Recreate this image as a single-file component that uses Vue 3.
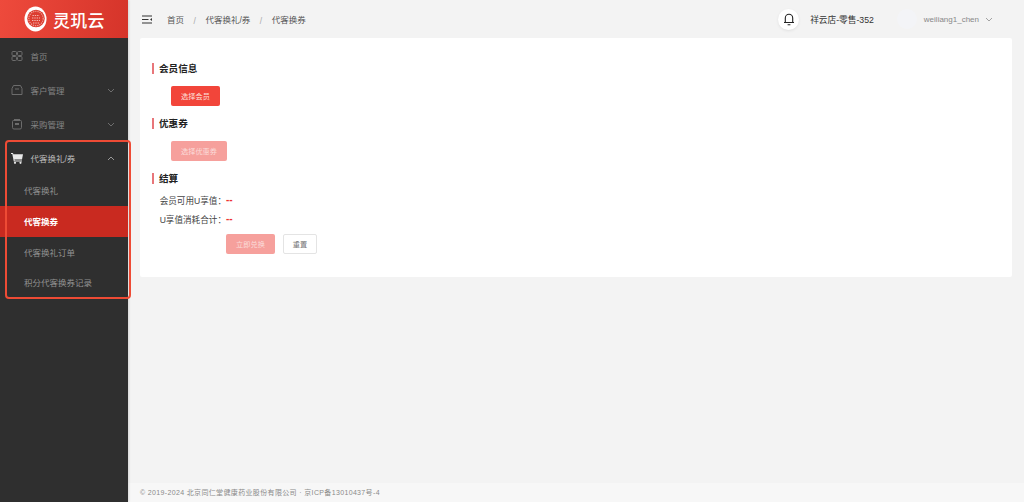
<template>
  <div class="page">
    <aside class="side">
      <div class="logo">
        <svg class="seal" width="24" height="26" viewBox="0 0 24 26">
          <ellipse cx="11.5" cy="13" rx="11" ry="12.5" fill="#fff" />
          <circle cx="12" cy="12.5" r="8.8" fill="#dc3d30" />
          <circle cx="12" cy="12.5" r="7.2" fill="none" stroke="#f0a79e" stroke-width="1.1" stroke-dasharray="1.2 1" />
          <path d="M8.5 9.5h7M8 12h8M8 14.5h8M9 17h6" stroke="#f3b5ad" stroke-width="1.1" stroke-dasharray="1.4 0.9" />
        </svg>
        <span class="brand">灵玑云</span>
      </div>
      <nav class="menu">
        <div class="item">
          <svg class="ic" width="12" height="12" viewBox="0 0 12 12" fill="none" stroke="#6c6c6c" stroke-width="1">
            <rect x="1" y="1.5" width="4.5" height="4" rx="1" /><rect x="6.5" y="1.5" width="4.5" height="4" rx="1" />
            <rect x="1" y="6.5" width="4.5" height="4" rx="1" /><rect x="6.5" y="6.5" width="4.5" height="4" rx="1" />
          </svg>
          <span>首页</span>
        </div>
        <div class="item">
          <svg class="ic" width="12" height="12" viewBox="0 0 12 12" fill="none" stroke="#6c6c6c" stroke-width="1">
            <path d="M2.5 1.5h7l1.5 3v6H1v-6z" /><path d="M4 5h4" />
          </svg>
          <span>客户管理</span>
          <svg class="ch" width="8" height="5" viewBox="0 0 8 5" fill="none" stroke="#6e6e6e" stroke-width="1"><path d="M1 1l3 3 3-3" /></svg>
        </div>
        <div class="item">
          <svg class="ic" width="12" height="12" viewBox="0 0 12 12" fill="none" stroke="#6c6c6c" stroke-width="1">
            <path d="M3 1.5h6M1.5 3.5a1 1 0 0 1 1-1h7a1 1 0 0 1 1 1v6a1.5 1.5 0 0 1-1.5 1.5H3a1.5 1.5 0 0 1-1.5-1.5z" /><rect x="4" y="5" width="4" height="2" fill="#6c6c6c" stroke="none" />
          </svg>
          <span>采购管理</span>
          <svg class="ch" width="8" height="5" viewBox="0 0 8 5" fill="none" stroke="#6e6e6e" stroke-width="1"><path d="M1 1l3 3 3-3" /></svg>
        </div>
        <div class="item open">
          <svg class="ic" width="12" height="12" viewBox="0 0 12 12" fill="#e8e8e8">
            <path d="M0 1h2l.4 1.2H12l-1 5.3H3.4l.3 1.1H11v1H2.8L1.3 2H0z" />
            <circle cx="4" cy="10.8" r="1.1" /><circle cx="9.5" cy="10.8" r="1.1" />
          </svg>
          <span>代客换礼/券</span>
          <svg class="ch" width="8" height="5" viewBox="0 0 8 5" fill="none" stroke="#999" stroke-width="1"><path d="M1 4l3-3 3 3" /></svg>
        </div>
        <div v-for="s in subs" :key="s" :class="['sub', { on: s === '代客换券' }]">{{ s }}</div>
      </nav>
      <div class="mark"></div>
    </aside>

    <div class="right">
      <header class="top">
        <svg class="fold" width="10" height="9" viewBox="0 0 10 9" fill="none" stroke="#333" stroke-width="1.1">
          <path d="M0 1h10M0 4.5h6.5M0 8h10" /><path d="M10 3v3L8 4.5z" fill="#333" stroke="none" />
        </svg>
        <div class="crumb">
          <span>首页</span><span class="sep">/</span><span>代客换礼/券</span><span class="sep">/</span><span>代客换券</span>
        </div>
        <div class="bell">
          <svg width="12" height="14" viewBox="0 0 12 14" fill="none" stroke="#222" stroke-width="1.1">
            <path d="M1 10.5h10M2.3 10.5V6a3.7 3.7 0 0 1 7.4 0v4.5M4.6 12.8h2.8" />
          </svg>
        </div>
        <span class="store">祥云店-零售-352</span>
        <span class="avatar"></span>
        <span class="user">weiliang1_chen</span>
        <svg class="uch" width="8" height="5" viewBox="0 0 8 5" fill="none" stroke="#999" stroke-width="0.9"><path d="M1 1l3 3 3-3" /></svg>
      </header>

      <main class="main">
        <section class="card">
          <h3 class="title">会员信息</h3>
          <button class="btn red">选择会员</button>
          <h3 class="title">优惠券</h3>
          <button class="btn pale pick">选择优惠券</button>
          <h3 class="title">结算</h3>
          <div class="lines">
            <div class="line"><label>会员可用U享值：</label><b>--</b></div>
            <div class="line"><label>U享值消耗合计：</label><b>--</b></div>
          </div>
          <div class="acts">
            <button class="btn pale wide">立即兑换</button>
            <button class="btn plain">重置</button>
          </div>
        </section>
      </main>

      <footer class="foot">© 2019-2024 北京同仁堂健康药业股份有限公司 · 京ICP备13010437号-4</footer>
    </div>
  </div>
</template>

<script setup>
const subs = ['代客换礼', '代客换券', '代客换礼订单', '积分代客换券记录']
</script>

<style>
html, body { margin: 0; background: #f3f3f3; }
</style>

<style scoped>
.page { display: flex; height: 502px; width: 1024px; overflow: hidden; font-family: "Liberation Sans", "Noto Sans CJK SC", sans-serif; background: #f3f3f3; }
.side { position: relative; width: 128px; flex: none; background: #2f2f2f; box-shadow: 1px 0 2px rgba(0,0,0,.12); z-index: 1; }
.logo { height: 38px; display: flex; align-items: center; padding-left: 24px; gap: 5px; background: linear-gradient(100deg, #ee4a3c, #d5342a); }
.seal { flex: none; }
.brand { color: #fff; font-size: 17px; font-weight: 500; letter-spacing: 0.3px; }
.menu { padding-top: 1px; }
.item { height: 34px; display: flex; align-items: center; padding-left: 11px; color: #858585; font-size: 8.5px; }
.ic { margin-right: 7.5px; flex: none; }
.ch { margin-left: auto; margin-right: 13px; }
.item.open { color: #bcbcbc; }
.sub { height: 30.8px; line-height: 32px; padding-left: 24px; color: #929292; font-size: 8.5px; }
.sub.on { background: #c92a20; color: #fff; font-weight: 700; }
.mark { position: absolute; left: 5px; top: 140px; width: 122px; height: 155px; border: 2px solid #ee4b35; border-radius: 4px; pointer-events: none; }

.right { flex: 1; display: flex; flex-direction: column; min-width: 0; }
.top { height: 38px; flex: none; display: flex; align-items: center; padding-left: 14px; font-size: 8.5px; }
.fold { flex: none; }
.crumb { display: flex; align-items: center; margin-left: 15px; color: #555; gap: 9.5px; }
.sep { color: #aaa; padding-top: 3px; }
.bell { margin-left: auto; width: 21px; height: 21px; border-radius: 50%; background: #fff; display: flex; align-items: center; justify-content: center; box-shadow: 0 1px 3px rgba(0,0,0,.08); }
.store { margin-left: 11px; color: #333; font-size: 8.7px; }
.avatar { margin-left: 23px; width: 20px; height: 20px; border-radius: 50%; background: #f3f4f7; }
.user { margin-left: 7px; color: #888; font-size: 8px; }
.uch { margin-left: 6px; margin-right: 31px; }

.main { flex: 1; padding: 0 12px; }
.card { height: 239px; box-sizing: border-box; background: #fff; border-radius: 2px; padding: 25px 12px 0; }
.title { margin: 0; padding-left: 5px; height: 11px; line-height: 11px; border-left: 2px solid #e8767a; color: #222; font-size: 9.6px; font-weight: 700; }
.btn { display: block; height: 20px; box-sizing: border-box; padding: 0; border-radius: 2px; border: 1px solid transparent; font-family: inherit; font-size: 7.2px; color: #fff; }
.red { width: 49px; margin: 12px 0 12px 19px; background: #f2453a; color: #fde0dc; }
.pale { background: #f6a09c; color: #fbdcda; }
.pick { width: 56px; margin: 12px 0 12px 19px; }
.lines { margin-top: 6px; }
.line { display: flex; height: 19px; align-items: center; font-size: 8.6px; color: #444; }
.line label { width: 74px; text-align: right; white-space: nowrap; }
.line b { color: #e33; font-weight: 700; font-size: 10px; line-height: 19px; }
.acts { display: flex; gap: 8px; padding-left: 74px; margin-top: 6px; }
.wide { width: 49px; }
.plain { width: 34px; background: #fff; border-color: #e4e4e4; color: #777; }
.foot { height: 19px; flex: none; line-height: 19px; padding-left: 12px; font-size: 7px; letter-spacing: 0.35px; color: #8a8a8a; background: #f7f7f7; }
</style>
